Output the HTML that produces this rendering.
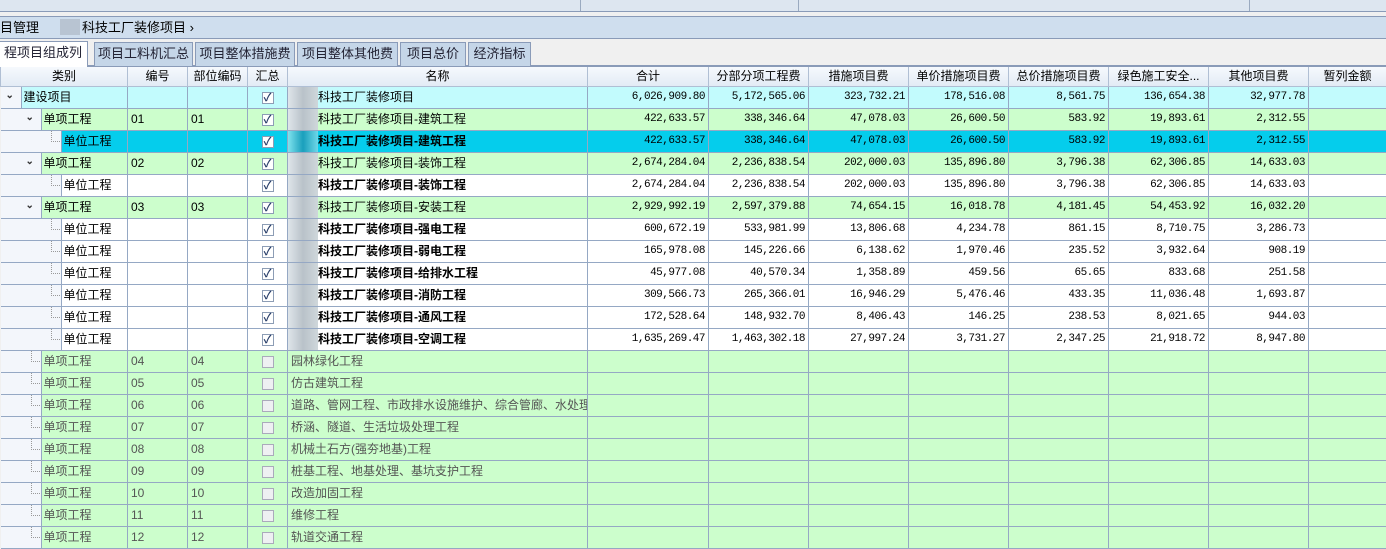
<!DOCTYPE html>
<html><head><meta charset="utf-8"><style>
*{margin:0;padding:0;box-sizing:border-box}
body{width:1386px;height:536px;overflow:hidden;background:#f0f0f0;font-family:"Liberation Sans","Noto Sans CJK SC",sans-serif;font-size:12px;color:#000;position:relative}
.top{position:absolute;left:0;top:0;width:1386px;height:12px;background:#dde6f0;border-bottom:1px solid #8a9bb8}
.top i{position:absolute;top:0;height:11px;border-left:1px solid #9aaac0}
.bc{position:absolute;left:0;top:16px;width:1386px;height:23px;background:#cfdeee;border-top:1px solid #8a9bb8;border-bottom:1px solid #8a9bb8}
.bc span{position:absolute;top:1px;font-size:13px;line-height:20px}
.tabs{position:absolute;left:0;top:39px;width:1386px;height:28px;background:#f0f0f0;border-bottom:2px solid #8a9bb8}
.tab{position:absolute;top:3px;height:24px;background:#c5d6e8;border:1px solid #8a9bb8;border-bottom:none;font-size:13px;text-align:center;line-height:22px;color:#223}
.tab.a{background:#fff;top:2px;height:26px}
table{position:absolute;left:0;top:67px;border-collapse:collapse;table-layout:fixed;width:1386px}
td{height:22px;border:1px solid #95a8c4;padding:0 3px;line-height:20px;white-space:nowrap;overflow:hidden;font-size:12px;position:relative;vertical-align:middle}
tr.h td{height:19px;line-height:17px;background:linear-gradient(#f6f9fd,#e3ebf5);text-align:center;border-color:#b0bfd4;border-top:none}
td.n{text-align:right;font-family:"Liberation Mono",monospace;font-size:11px;letter-spacing:-0.5px}
td.c{text-align:center}
td.t{background:#f3f6fb;padding:0;border-left:none}
td.t div{position:absolute;top:-1px;bottom:-1px;right:-1px;border:1px solid #95a8c4;padding:0 2px;line-height:20px}
tr.p td,tr.p td.t div{background:#c2fbfd}
tr.g td,tr.g td.t div,tr.x td,tr.x td.t div{background:#ccfecc}
tr.w td,tr.w td.t div{background:#fff}
tr.s td,tr.s td.t div{background:#05cdec}
tr td.t{background:#f3f6fb !important}
tr.x td,tr.x td.t div{color:#555}
.b{font-weight:bold}
.cb{display:inline-block;width:12px;height:12px;border:1px solid #8d9db5;background:#fff;vertical-align:middle;font-size:11px;line-height:10px;color:#2a3f6a;text-align:center;font-weight:bold}
.cb.e{background:#eef0f2;border-color:#aab}
.bl{position:absolute;left:0;top:0;width:30px;height:22px;background:linear-gradient(90deg,#dfe5ea,#b9c2c9,#cfd7db)}
.nm{position:absolute;left:30px;top:0}
.arr{position:absolute;font-size:10px;color:#333;top:0;line-height:18px;font-weight:bold}
.dl{position:absolute;top:0;height:11px;border-left:1px dotted #999;border-bottom:1px dotted #999}
</style></head><body>
<div class="top"><i style="left:580px"></i><i style="left:798px"></i><i style="left:1249px"></i></div>
<div class="bc"><span style="left:0">目管理</span><span style="left:60px;top:2px;width:20px;height:16px;background:#b8c4d2"></span><span style="left:82px">科技工厂装修项目 ›</span></div>
<div class="tabs">
<div class="tab a" style="left:-2px;width:90px">程项目组成列表</div>
<div class="tab" style="left:94px;width:99px">项目工料机汇总</div>
<div class="tab" style="left:195px;width:100px">项目整体措施费</div>
<div class="tab" style="left:297px;width:101px">项目整体其他费</div>
<div class="tab" style="left:400px;width:66px">项目总价</div>
<div class="tab" style="left:468px;width:63px">经济指标</div>
</div>
<table>
<colgroup><col style="width:127px"><col style="width:60px"><col style="width:60px"><col style="width:40px"><col style="width:300px"><col style="width:121px"><col style="width:100px"><col style="width:100px"><col style="width:100px"><col style="width:100px"><col style="width:100px"><col style="width:100px"><col style="width:78px"></colgroup>
<tr class="h"><td>类别</td><td>编号</td><td>部位编码</td><td>汇总</td><td>名称</td><td>合计</td><td>分部分项工程费</td><td>措施项目费</td><td>单价措施项目费</td><td>总价措施项目费</td><td>绿色施工安全...</td><td>其他项目费</td><td>暂列金额</td></tr>
<tr class="p"><td class="t"><span class="arr" style="left:5px">⌄</span><div style="left:20px">建设项目</div></td><td></td><td></td><td class="c"><span class="cb">✓</span></td><td><span class="bl"></span><span class="nm">科技工厂装修项目</span></td><td class="n">6,026,909.80</td><td class="n">5,172,565.06</td><td class="n">323,732.21</td><td class="n">178,516.08</td><td class="n">8,561.75</td><td class="n">136,654.38</td><td class="n">32,977.78</td><td></td></tr>
<tr class="g"><td class="t"><span class="arr" style="left:25px">⌄</span><div style="left:40px">单项工程</div></td><td>01</td><td>01</td><td class="c"><span class="cb">✓</span></td><td><span class="bl"></span><span class="nm">科技工厂装修项目-建筑工程</span></td><td class="n">422,633.57</td><td class="n">338,346.64</td><td class="n">47,078.03</td><td class="n">26,600.50</td><td class="n">583.92</td><td class="n">19,893.61</td><td class="n">2,312.55</td><td></td></tr>
<tr class="s"><td class="t"><span class="dl" style="left:50px;width:9px"></span><div style="left:60px">单位工程</div></td><td></td><td></td><td class="c"><span class="cb">✓</span></td><td><span class="bl" style="background:linear-gradient(90deg,#7fe3ee,#1a9fbc,#6fd8e8)"></span><span class="nm b">科技工厂装修项目-建筑工程</span></td><td class="n">422,633.57</td><td class="n">338,346.64</td><td class="n">47,078.03</td><td class="n">26,600.50</td><td class="n">583.92</td><td class="n">19,893.61</td><td class="n">2,312.55</td><td></td></tr>
<tr class="g"><td class="t"><span class="arr" style="left:25px">⌄</span><div style="left:40px">单项工程</div></td><td>02</td><td>02</td><td class="c"><span class="cb">✓</span></td><td><span class="bl"></span><span class="nm">科技工厂装修项目-装饰工程</span></td><td class="n">2,674,284.04</td><td class="n">2,236,838.54</td><td class="n">202,000.03</td><td class="n">135,896.80</td><td class="n">3,796.38</td><td class="n">62,306.85</td><td class="n">14,633.03</td><td></td></tr>
<tr class="w"><td class="t"><span class="dl" style="left:50px;width:9px"></span><div style="left:60px">单位工程</div></td><td></td><td></td><td class="c"><span class="cb">✓</span></td><td><span class="bl"></span><span class="nm b">科技工厂装修项目-装饰工程</span></td><td class="n">2,674,284.04</td><td class="n">2,236,838.54</td><td class="n">202,000.03</td><td class="n">135,896.80</td><td class="n">3,796.38</td><td class="n">62,306.85</td><td class="n">14,633.03</td><td></td></tr>
<tr class="g"><td class="t"><span class="arr" style="left:25px">⌄</span><div style="left:40px">单项工程</div></td><td>03</td><td>03</td><td class="c"><span class="cb">✓</span></td><td><span class="bl"></span><span class="nm">科技工厂装修项目-安装工程</span></td><td class="n">2,929,992.19</td><td class="n">2,597,379.88</td><td class="n">74,654.15</td><td class="n">16,018.78</td><td class="n">4,181.45</td><td class="n">54,453.92</td><td class="n">16,032.20</td><td></td></tr>
<tr class="w"><td class="t"><span class="dl" style="left:50px;width:9px"></span><div style="left:60px">单位工程</div></td><td></td><td></td><td class="c"><span class="cb">✓</span></td><td><span class="bl"></span><span class="nm b">科技工厂装修项目-强电工程</span></td><td class="n">600,672.19</td><td class="n">533,981.99</td><td class="n">13,806.68</td><td class="n">4,234.78</td><td class="n">861.15</td><td class="n">8,710.75</td><td class="n">3,286.73</td><td></td></tr>
<tr class="w"><td class="t"><span class="dl" style="left:50px;width:9px"></span><div style="left:60px">单位工程</div></td><td></td><td></td><td class="c"><span class="cb">✓</span></td><td><span class="bl"></span><span class="nm b">科技工厂装修项目-弱电工程</span></td><td class="n">165,978.08</td><td class="n">145,226.66</td><td class="n">6,138.62</td><td class="n">1,970.46</td><td class="n">235.52</td><td class="n">3,932.64</td><td class="n">908.19</td><td></td></tr>
<tr class="w"><td class="t"><span class="dl" style="left:50px;width:9px"></span><div style="left:60px">单位工程</div></td><td></td><td></td><td class="c"><span class="cb">✓</span></td><td><span class="bl"></span><span class="nm b">科技工厂装修项目-给排水工程</span></td><td class="n">45,977.08</td><td class="n">40,570.34</td><td class="n">1,358.89</td><td class="n">459.56</td><td class="n">65.65</td><td class="n">833.68</td><td class="n">251.58</td><td></td></tr>
<tr class="w"><td class="t"><span class="dl" style="left:50px;width:9px"></span><div style="left:60px">单位工程</div></td><td></td><td></td><td class="c"><span class="cb">✓</span></td><td><span class="bl"></span><span class="nm b">科技工厂装修项目-消防工程</span></td><td class="n">309,566.73</td><td class="n">265,366.01</td><td class="n">16,946.29</td><td class="n">5,476.46</td><td class="n">433.35</td><td class="n">11,036.48</td><td class="n">1,693.87</td><td></td></tr>
<tr class="w"><td class="t"><span class="dl" style="left:50px;width:9px"></span><div style="left:60px">单位工程</div></td><td></td><td></td><td class="c"><span class="cb">✓</span></td><td><span class="bl"></span><span class="nm b">科技工厂装修项目-通风工程</span></td><td class="n">172,528.64</td><td class="n">148,932.70</td><td class="n">8,406.43</td><td class="n">146.25</td><td class="n">238.53</td><td class="n">8,021.65</td><td class="n">944.03</td><td></td></tr>
<tr class="w"><td class="t"><span class="dl" style="left:50px;width:9px"></span><div style="left:60px">单位工程</div></td><td></td><td></td><td class="c"><span class="cb">✓</span></td><td><span class="bl"></span><span class="nm b">科技工厂装修项目-空调工程</span></td><td class="n">1,635,269.47</td><td class="n">1,463,302.18</td><td class="n">27,997.24</td><td class="n">3,731.27</td><td class="n">2,347.25</td><td class="n">21,918.72</td><td class="n">8,947.80</td><td></td></tr>
<tr class="x"><td class="t"><span class="dl" style="left:30px;width:9px"></span><div style="left:40px">单项工程</div></td><td>04</td><td>04</td><td class="c"><span class="cb e"></span></td><td>园林绿化工程</td><td></td><td></td><td></td><td></td><td></td><td></td><td></td><td></td></tr>
<tr class="x"><td class="t"><span class="dl" style="left:30px;width:9px"></span><div style="left:40px">单项工程</div></td><td>05</td><td>05</td><td class="c"><span class="cb e"></span></td><td>仿古建筑工程</td><td></td><td></td><td></td><td></td><td></td><td></td><td></td><td></td></tr>
<tr class="x"><td class="t"><span class="dl" style="left:30px;width:9px"></span><div style="left:40px">单项工程</div></td><td>06</td><td>06</td><td class="c"><span class="cb e"></span></td><td>道路、管网工程、市政排水设施维护、综合管廊、水处理</td><td></td><td></td><td></td><td></td><td></td><td></td><td></td><td></td></tr>
<tr class="x"><td class="t"><span class="dl" style="left:30px;width:9px"></span><div style="left:40px">单项工程</div></td><td>07</td><td>07</td><td class="c"><span class="cb e"></span></td><td>桥涵、隧道、生活垃圾处理工程</td><td></td><td></td><td></td><td></td><td></td><td></td><td></td><td></td></tr>
<tr class="x"><td class="t"><span class="dl" style="left:30px;width:9px"></span><div style="left:40px">单项工程</div></td><td>08</td><td>08</td><td class="c"><span class="cb e"></span></td><td>机械土石方(强夯地基)工程</td><td></td><td></td><td></td><td></td><td></td><td></td><td></td><td></td></tr>
<tr class="x"><td class="t"><span class="dl" style="left:30px;width:9px"></span><div style="left:40px">单项工程</div></td><td>09</td><td>09</td><td class="c"><span class="cb e"></span></td><td>桩基工程、地基处理、基坑支护工程</td><td></td><td></td><td></td><td></td><td></td><td></td><td></td><td></td></tr>
<tr class="x"><td class="t"><span class="dl" style="left:30px;width:9px"></span><div style="left:40px">单项工程</div></td><td>10</td><td>10</td><td class="c"><span class="cb e"></span></td><td>改造加固工程</td><td></td><td></td><td></td><td></td><td></td><td></td><td></td><td></td></tr>
<tr class="x"><td class="t"><span class="dl" style="left:30px;width:9px"></span><div style="left:40px">单项工程</div></td><td>11</td><td>11</td><td class="c"><span class="cb e"></span></td><td>维修工程</td><td></td><td></td><td></td><td></td><td></td><td></td><td></td><td></td></tr>
<tr class="x"><td class="t"><span class="dl" style="left:30px;width:9px"></span><div style="left:40px">单项工程</div></td><td>12</td><td>12</td><td class="c"><span class="cb e"></span></td><td>轨道交通工程</td><td></td><td></td><td></td><td></td><td></td><td></td><td></td><td></td></tr>
</table>
</body></html>
